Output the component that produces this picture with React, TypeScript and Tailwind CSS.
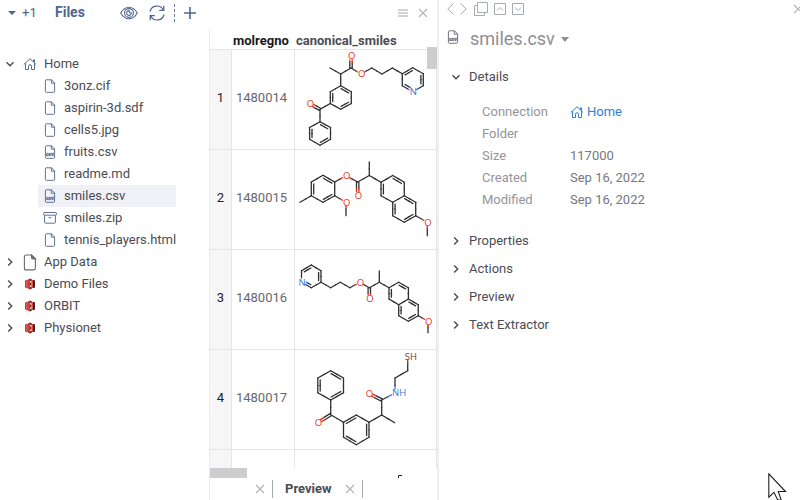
import React from "react";

type Atom = [number, number, string?];
type Bond = [number, number, number?, number?];
type Molecule = { name: string; atoms: Atom[]; bonds: Bond[] };

const COLORS: Record<string, string> = { O: "#e5341a", N: "#3b78d8", NH: "#3b78d8", SH: "#8a3038" };

// Bond: [from, to, order, side]. side 1 / -1 puts the inner line on one flank, 0 splits it evenly.
const MOLECULES: { id: number; mol: Molecule }[] = [
  {
    id: 1480014,
    mol: {
      name: "Molecule 1480014",
      atoms: [
        [35, 18], [45.7, 24], [56, 18], [56, 6, "O"], [66, 24, "O"], [76.7, 18], [87, 24], [97.3, 18],
        [107.3, 23.7], [117.7, 17.7], [128.3, 23.7], [128.3, 35.7], [117.7, 41.7, "N"], [107.3, 35.7],
        [45.7, 35.7], [56.3, 41.7], [56.3, 53.5], [45.7, 59.3], [35.3, 53.5], [35.3, 41.7],
        [25, 59.3], [14.7, 53.7, "O"],
        [25, 71.7], [35.5, 77.5], [35.5, 89.3], [25, 95.3], [14.6, 89.3], [14.6, 77.5],
      ],
      bonds: [
        [0, 1], [1, 2], [2, 3, 2, 0], [2, 4], [4, 5], [5, 6], [6, 7], [7, 8], [8, 9, 2, 1], [9, 10],
        [10, 11, 2, 1], [11, 12], [12, 13, 2, 1], [13, 8], [1, 14], [14, 15, 2, 1], [15, 16],
        [16, 17, 2, 1], [17, 18], [18, 19, 2, 1], [19, 14], [18, 20], [20, 21, 2, 0], [20, 22],
        [22, 23, 2, 1], [23, 24], [24, 25, 2, 1], [25, 26], [26, 27, 2, 1], [27, 22],
      ],
    },
  },
  {
    id: 1480015,
    mol: {
      name: "Molecule 1480015",
      atoms: [
        [5, 52.3], [16.3, 45.7], [16.3, 32], [28, 25.3], [39.7, 32], [39.7, 45.7], [28, 52.3],
        [51, 25.7, "O"], [62.7, 32], [62.7, 45.7, "O"], [74.3, 25.5], [74.3, 12],
        [51, 52.3, "O"], [51, 65.7],
        [86, 32.3], [97.7, 25.5], [109.3, 32.3], [109.3, 45.7], [97.7, 52.3], [86, 45.7],
        [97.7, 65.7], [109.3, 72.3], [120.7, 65.7], [120.7, 52.3], [132.3, 72.3, "O"], [132.3, 85.7],
      ],
      bonds: [
        [0, 1], [1, 2, 2, 1], [2, 3], [3, 4, 2, 1], [4, 5], [5, 6, 2, 1], [6, 1], [4, 7], [7, 8],
        [8, 9, 2, 0], [8, 10], [10, 11], [5, 12], [12, 13], [10, 14], [14, 15], [15, 16, 2, 1],
        [16, 17], [17, 18], [18, 19], [19, 14, 2, 1], [18, 20, 2, -1], [20, 21], [21, 22, 2, -1],
        [22, 23], [23, 17, 2, -1], [22, 24], [24, 25],
      ],
    },
  },
  {
    id: 1480016,
    mol: {
      name: "Molecule 1480016",
      atoms: [
        [6.5, 32.3, "N"], [6.5, 20.7], [16.3, 15], [26, 20.7], [26, 32.3], [16.3, 37.7],
        [35.7, 37.7], [45.3, 32.3], [55, 37.7], [64.7, 32.3, "O"], [74.3, 37.7], [74.3, 49, "O"],
        [84.3, 32.3], [84.3, 21],
        [94, 37.7], [103.7, 32.3], [113.4, 37.7], [113.4, 49], [103.7, 54.7], [94, 49],
        [103.7, 65.7], [113.4, 71.3], [123.3, 65.7], [123.3, 54.7], [133, 71.3, "O"], [133, 82.7],
      ],
      bonds: [
        [0, 1], [1, 2, 2, 1], [2, 3], [3, 4, 2, 1], [4, 5], [5, 0, 2, 1], [4, 6], [6, 7], [7, 8],
        [8, 9], [9, 10], [10, 11, 2, 0], [10, 12], [12, 13], [12, 14], [14, 15], [15, 16, 2, 1],
        [16, 17], [17, 18], [18, 19], [19, 14, 2, 1], [18, 20, 2, -1], [20, 21], [21, 22, 2, -1],
        [22, 23], [23, 17, 2, -1], [22, 24], [24, 25],
      ],
    },
  },
  {
    id: 1480017,
    mol: {
      name: "Molecule 1480017",
      atoms: [
        [35.7, 20.7], [48.5, 28], [48.5, 42.8], [35.7, 50], [22.8, 42.8], [22.8, 28],
        [35.7, 64.7], [22.7, 72.7, "O"],
        [48.5, 72.3], [61.3, 65], [74, 72.3], [74, 87.3], [61.3, 94.7], [48.5, 87.3],
        [86.7, 65], [99.7, 72.7], [86.7, 50], [73.7, 43.3, "O"], [100, 43, "NH"], [100, 28],
        [112.7, 20.7], [112.7, 6.5, "SH"],
      ],
      bonds: [
        [0, 1, 2, 1], [1, 2], [2, 3, 2, 1], [3, 4], [4, 5, 2, 1], [5, 0], [3, 6], [6, 7, 2, 0],
        [6, 8], [8, 9, 2, 1], [9, 10], [10, 11, 2, 1], [11, 12], [12, 13, 2, 1], [13, 8], [10, 14],
        [14, 15], [14, 16], [16, 17, 2, 0], [16, 18], [18, 19], [19, 20], [20, 21],
      ],
    },
  },
];

function MoleculeDrawing({ mol }: { mol: Molecule }) {
  const segments: React.ReactNode[] = [];
  mol.bonds.forEach(([from, to, order = 1, side = 0], i) => {
    const [ax, ay, al] = mol.atoms[from];
    const [bx, by, bl] = mol.atoms[to];
    const length = Math.hypot(bx - ax, by - ay);
    const ux = (bx - ax) / length;
    const uy = (by - ay) / length;
    const shifts = order === 1 ? [0] : side === 0 ? [-1.2, 1.2] : [0, 2.4 * side];
    shifts.forEach((shift, k) => {
      const inset = shift !== 0 && side !== 0 ? 1.8 : 0;
      const start = Math.max(al ? 4 : 0, inset);
      const end = length - Math.max(bl ? 4 : 0, inset);
      const middle = length / 2;
      const at = (t: number): [number, number] => [ax + ux * t - uy * shift, ay + uy * t + ux * shift];
      const draw = (t0: number, t1: number, color: string, key: string) => {
        const [x1, y1] = at(t0);
        const [x2, y2] = at(t1);
        segments.push(<line key={key} x1={x1} y1={y1} x2={x2} y2={y2} stroke={color} />);
      };
      draw(start, middle, al ? COLORS[al] : "#2f3036", `${i}-${k}-a`);
      draw(middle, end, bl ? COLORS[bl] : "#2f3036", `${i}-${k}-b`);
    });
  });
  return (
    <svg viewBox="0 0 141 99" className="block h-[99px] w-[141px]" role="img" aria-label={mol.name}>
      <g strokeWidth="1.3" strokeLinecap="round">{segments}</g>
      {mol.atoms.map(([x, y, label], i) =>
        label ? (
          <text key={i} x={x - 3} y={y + 3.3} fontSize="9.5" fill={COLORS[label]} fontFamily="Open Sans, sans-serif">
            {label}
          </text>
        ) : null
      )}
    </svg>
  );
}

function Chevron({ open = false }: { open?: boolean }) {
  return (
    <svg viewBox="0 0 10 10" className="size-[10px] shrink-0" fill="none" stroke="#4a4a52" strokeWidth="1.4">
      <path d={open ? "M1.5 3.3 5 6.8 8.5 3.3" : "M3.2 1.5 6.7 5 3.2 8.5"} />
    </svg>
  );
}

function HomeIcon() {
  return (
    <svg viewBox="0 0 14 14" className="size-[14px] shrink-0" fill="none" stroke="currentColor" strokeWidth="1">
      <path d="M.8 7.500 7 1.800 13.200 7.500M2.500 6.200v6.300h3V9.200a1.500 1.500 0 0 1 3 0v3.300h3V6.200M10.500 4.700V2.800h1v2.800" />
    </svg>
  );
}

function FileIcon({ csv = false }: { csv?: boolean }) {
  return (
    <svg viewBox="0 0 12 14" className="h-[14px] w-[12px] shrink-0" fill="none" stroke="currentColor">
      <path d="M2.2.8H7.5L10.6 4v8.4q0 .9-.9.9H2.3q-.9 0-.9-.9V1.7q0-.9.8-.9Z" />
      <path d="M7.3.8v3.4h3.3" />
      {csv && (
        <text x="2" y="10.600" fontSize="5" fontWeight="900" fill="currentColor" stroke="currentColor" strokeWidth=".3" fontFamily="Roboto, sans-serif">
          csv
        </text>
      )}
    </svg>
  );
}

function ArchiveIcon() {
  return (
    <svg viewBox="0 0 14 14" className="h-[14px] w-[14px] shrink-0" fill="none" stroke="currentColor">
      <rect x=".6" y="1.5" width="12.8" height="2.7" rx=".6" />
      <path d="M1.6 4.2v7q0 1 1 1h8.8q1 0 1-1v-7M5.5 6.7h3" />
    </svg>
  );
}

function PageIcon() {
  return (
    <svg viewBox="0 0 14 17" className="h-[17px] w-[14px] shrink-0" fill="none" stroke="#6b6b6b" strokeWidth="1.1">
      <path d="M3 1h5.5L12.4 5v9.300q0 1.600-1.600 1.600H3q-1.600 0-1.600-1.600V2.600Q1.400 1 3 1Z" />
      <path d="M8.500 1v2.600q0 1.400 1.400 1.400h2.500Z" fill="#6b6b6b" />
    </svg>
  );
}

function BucketIcon() {
  return (
    <svg viewBox="0 0 12 12" className="size-[12px] shrink-0">
      <path d="M1 2.600 2.800 1.800v8.400L1 9.400Z" fill="#c93a34" />
      <path d="M2.800 1.800H5l1 .4v7.600l-1 .4H2.800Z" fill="#e0443d" />
      <path d="M6 .4 4.200 1.300v2.300L6 3.100ZM6 4.500H4.600v3H6ZM6 8.900l-1.800-.5v2.300l1.800.9Z" fill="#c8332e" />
      <path d="m6 .4 1.800.9v2.300L6 3.100ZM6 4.500h1.400v3H6ZM6 8.900l1.800-.5v2.300l-1.800.9Z" fill="#7d2522" />
      <path d="M7.500 2h1.700v8H7.500Z" fill="#e0443d" />
      <path d="M9 1.800 11 2.600v6.800l-2 .8Z" fill="#3f2323" />
    </svg>
  );
}

function CloseIcon() {
  return (
    <svg viewBox="0 0 10 10" className="size-[10px] shrink-0" fill="none" stroke="#b4b5ba" strokeWidth="1.2">
      <path d="m1 1 8 8M9 1 1 9" />
    </svg>
  );
}

const FILES = ["3onz.cif", "aspirin-3d.sdf", "cells5.jpg", "fruits.csv", "readme.md", "smiles.csv", "smiles.zip", "tennis_players.html"];
const SHARES = ["App Data", "Demo Files", "ORBIT", "Physionet"];
const SECTIONS = ["Properties", "Actions", "Preview", "Text Extractor"];
const DETAILS = [
  ["Connection", "Home"],
  ["Folder", ""],
  ["Size", "117000"],
  ["Created", "Sep 16, 2022"],
  ["Modified", "Sep 16, 2022"],
];

function FilesPanel() {
  return (
    <aside className="flex w-[209px] shrink-0 flex-col">
      <header className="flex h-[29px] shrink-0 items-center pb-1 pl-2 text-[#4f6591]">
        <button className="flex w-[47px] items-center gap-[6px] text-[13px]">
          <svg viewBox="0 0 8 4" className="h-[4px] w-[8px]" fill="currentColor"><path d="M0 0h8L4 4Z" /></svg>
          +1
        </button>
        <h1 className="w-[65px] text-[14px] font-bold">Files</h1>
        <button aria-label="Show" className="w-[29px]">
          <svg viewBox="0 0 18 14" className="h-[14px] w-[18px]" fill="none" stroke="currentColor" strokeWidth="1.1">
            <path d="M.7 7Q4 1.200 9 1.200T17.300 7Q14 12.800 9 12.800T.7 7Z" />
            <circle cx="9" cy="7" r="4.400" />
            <path d="M9 4.600A2.400 2.400 0 1 0 11.400 7Q9.200 7.300 9 4.600Z" />
          </svg>
        </button>
        <button aria-label="Refresh" className="w-[25px]">
          <svg viewBox="0 0 16 16" className="size-[16px]" fill="none" stroke="currentColor" strokeWidth="1.2">
            <path d="M1 6.500A7.100 7.100 0 0 1 14.300 5M14.800.8v4.600h-4.600M15 9.500A7.100 7.100 0 0 1 1.700 11M1.200 15.200v-4.600h4.600" />
          </svg>
        </button>
        <span className="mr-[9px] h-[18px] border-l border-dashed border-[#6f7890]" />
        <button aria-label="Add">
          <svg viewBox="0 0 12 12" className="size-[12px]" fill="none" stroke="currentColor" strokeWidth="1.600"><path d="M6 0v12M0 6h12" /></svg>
        </button>
      </header>
      <nav className="pt-6 leading-[22px]">
        <button className="flex h-[22px] items-center pl-[5px]">
          <Chevron open />
          <span className="mr-[7px] ml-2 text-[#5c6a88]"><HomeIcon /></span>
          Home
        </button>
        <ul className="ml-[38px] w-fit">
          {FILES.map((file) => (
            <li key={file}>
              <button className={`flex h-[22px] w-full items-center gap-2 pl-[6px] ${file === "smiles.csv" ? "bg-[#f0f1f6]" : ""}`}>
                <span className="flex w-[12px] shrink-0 justify-center text-[#5f7196]">
                  {file.endsWith(".zip") ? <ArchiveIcon /> : <FileIcon csv={file.endsWith(".csv")} />}
                </span>
                {file}
              </button>
            </li>
          ))}
        </ul>
        <ul>
          {SHARES.map((share) => (
            <li key={share}>
              <button className="flex h-[22px] items-center pl-[5px]">
                <Chevron />
                <span className="mr-[7px] ml-2 flex w-[14px] justify-center">
                  {share === "App Data" ? <PageIcon /> : <BucketIcon />}
                </span>
                {share}
              </button>
            </li>
          ))}
        </ul>
      </nav>
    </aside>
  );
}

function PreviewPanel() {
  return (
    <main className="flex w-[230px] shrink-0 flex-col border-r-2 border-[#efeff1]">
      <div className="flex h-[29px] shrink-0 items-center justify-end gap-[10px] pr-[9px] pb-[3px]">
        <button aria-label="Menu">
          <svg viewBox="0 0 10 8" className="h-[8px] w-[10px]" stroke="#a5a6ab"><path d="M0 1h10M0 4h10M0 7h10" /></svg>
        </button>
        <button aria-label="Close"><CloseIcon /></button>
      </div>
      <div className="relative min-h-0 flex-1 overflow-hidden border-l border-[#ececee]">
        <table className="w-full table-fixed border-separate border-spacing-0">
          <colgroup>
            <col className="w-[22px]" />
            <col className="w-[63px]" />
            <col />
          </colgroup>
          <thead>
            <tr className="text-left font-bold">
              <th className="h-[21px] border-b border-[#e6e6e8] p-0" aria-label="Row" />
              <th className="border-b border-[#e6e6e8] p-0 pt-[3px] pl-px leading-[17px] font-bold text-[#18181c]">molregno</th>
              <th className="border-b border-[#e6e6e8] p-0 pt-[3px] pl-px leading-[17px] font-bold">canonical_smiles</th>
            </tr>
          </thead>
          <tbody>
            {MOLECULES.map(({ id, mol }, i) => (
              <tr key={id}>
                <td className="h-[100px] border-r border-b border-[#e6e6e8] bg-[#f6f6f7] p-0 pb-1 text-center text-[#222226]">{i + 1}</td>
                <td className="border-r border-b border-[#e6e6e8] p-0 pr-[3px] pb-1 text-center text-[#66676d]">{id}</td>
                <td className="border-r border-b border-[#e6e6e8] p-0"><MoleculeDrawing mol={mol} /></td>
              </tr>
            ))}
            <tr>
              <td className="h-[100px] border-r border-[#e6e6e8] bg-[#f6f6f7] p-0" />
              <td className="border-r border-[#e6e6e8] p-0" />
              <td className="border-r border-[#e6e6e8] p-0" />
            </tr>
          </tbody>
        </table>
        <span className="absolute top-[18px] right-0 h-[22px] w-[10px] bg-[#cdcdcf]" />
      </div>
      <div className="flex h-[10px] shrink-0 justify-between border-l border-[#ececee] pr-[34px]">
        <span className="w-[37px] bg-[#cdcdcf]" />
        <svg viewBox="0 0 7 10" className="h-[10px] w-[7px]" fill="none" stroke="#222226"><path d="M6 7.500H2.500V10" /></svg>
      </div>
      <footer className="flex h-[22px] shrink-0 items-center border-l border-[#ececee] pb-px pl-[45px] leading-5 font-bold">
        <button aria-label="Close tab" className="mr-[7px]"><CloseIcon /></button>
        <div className="flex h-[18px] items-center gap-[13px] border-x border-[#a9aaae] pr-[7px] pl-3">
          <button>Preview</button>
          <button aria-label="Close Preview"><CloseIcon /></button>
        </div>
      </footer>
    </main>
  );
}

function ContextPanel() {
  return (
    <section className="min-w-0 flex-1 overflow-hidden">
      <div className="flex h-[18px] items-center pl-2 text-[#a8abb4]">
        <button aria-label="Back" className="mr-[6px]">
          <svg viewBox="0 0 7 12" className="h-[12px] w-[7px]" fill="none" stroke="currentColor"><path d="M6.500.5.8 6l5.700 5.500" /></svg>
        </button>
        <button aria-label="Forward" className="mr-[7px]">
          <svg viewBox="0 0 7 12" className="h-[12px] w-[7px]" fill="none" stroke="currentColor"><path d="M.5.5 6.200 6 .5 11.500" /></svg>
        </button>
        <button aria-label="Clone" className="mr-[6px]">
          <svg viewBox="0 0 14 14" className="size-[14px]" fill="none" stroke="currentColor"><path d="M3.500.5h10v10h-10ZM3.500 3.500h-3v10h10v-3" /></svg>
        </button>
        <button aria-label="Collapse all" className="mr-[6px]">
          <svg viewBox="0 0 12 12" className="size-[12px]" fill="none" stroke="currentColor"><path d="M.5.5h11v11H.5ZM3 7.500l3-3 3 3" /></svg>
        </button>
        <button aria-label="Expand all">
          <svg viewBox="0 0 12 12" className="size-[12px]" fill="none" stroke="currentColor"><path d="M.5.5h11v11H.5ZM3 4.500l3 3 3-3" /></svg>
        </button>
        <button aria-label="Close panel" className="ml-auto w-[7px] overflow-hidden"><CloseIcon /></button>
      </div>
      <div className="flex h-[42px] items-center pl-2 text-[#8d8e94]">
        <span className="mr-[11px] pb-1 text-[#74757b]"><FileIcon csv /></span>
        <h2 className="text-[18px] leading-6">smiles.csv</h2>
        <button aria-label="More actions" className="ml-[6px]">
          <svg viewBox="0 0 8 5" className="h-[5px] w-[8px]" fill="currentColor"><path d="M0 0h8L4 5Z" /></svg>
        </button>
      </div>
      <div className="pt-[3px] pl-3">
        <button className="flex h-[28px] items-center gap-2"><Chevron open />Details</button>
        <table className="mt-[10px] ml-[31px] leading-[22px]">
          <tbody>
            {DETAILS.map(([label, value]) => (
              <tr key={label} className="h-[22px]">
                <th className="w-[88px] p-0 text-left font-normal text-[#94959b]">{label}</th>
                <td className="p-0 text-[#77787e]">
                  {value === "Home" ? (
                    <a href="#home" className="flex items-center gap-[3px] text-[#2f80d8]"><HomeIcon />{value}</a>
                  ) : value}
                </td>
              </tr>
            ))}
          </tbody>
        </table>
        <div className="mt-4">
          {SECTIONS.map((section) => (
            <button key={section} className="flex h-[28px] items-center gap-2"><Chevron />{section}</button>
          ))}
        </div>
      </div>
    </section>
  );
}

export default function App() {
  return (
    <div className="relative flex h-screen overflow-hidden bg-white font-['Roboto',sans-serif] text-[13px] text-[#4b4c54]">
      <FilesPanel />
      <PreviewPanel />
      <ContextPanel />
      <svg viewBox="0 0 20 27" className="absolute right-[12px] bottom-0 h-[27px] w-[20px]" fill="white" stroke="#202024" strokeWidth="1.100">
        <path d="M.8.8v23.400L6 19.300 9.700 27h3.500L10.300 18.500h7.200Z" />
      </svg>
    </div>
  );
}
